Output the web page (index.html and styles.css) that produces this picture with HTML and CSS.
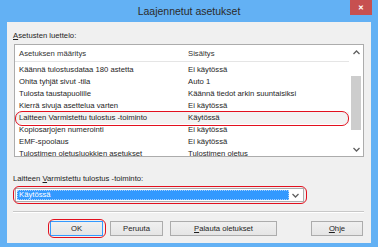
FILE: index.html
```html
<!DOCTYPE html>
<html lang="fi">
<head>
  <meta charset="UTF-8">
  <title>Laajennetut asetukset</title>
  <link rel="stylesheet" href="styles.css">
</head>
<body>
  <div class="window">
    <div class="titlebar">
      <span></span>
      <span class="title">Laajennetut asetukset</span>
      <span class="close">&#x2715;</span>
    </div>

    <div class="client">
      <div class="label"><u>A</u>setusten luettelo:</div>

      <div class="listbox">
        <div class="list">
          <div class="list-head">
            <span class="col-name">Asetuksen määritys</span>
            <span class="col-value">Sisältys</span>
          </div>
          <div class="rows">
            <div class="row"><span class="col-name">Käännä tulostusdataa 180 astetta</span><span class="col-value">Ei käytössä</span></div>
            <div class="row"><span class="col-name">Ohita tyhjät sivut -tila</span><span class="col-value">Auto 1</span></div>
            <div class="row"><span class="col-name">Tulosta taustapuolille</span><span class="col-value">Käännä tiedot arkin suuntaisiksi</span></div>
            <div class="row"><span class="col-name">Kierrä sivuja asettelua varten</span><span class="col-value">Ei käytössä</span></div>
            <div class="row selected"><span class="col-name">Laitteen Varmistettu tulostus -toiminto</span><span class="col-value">Käytössä</span></div>
            <div class="row"><span class="col-name">Kopiosarjojen numerointi</span><span class="col-value">Ei käytössä</span></div>
            <div class="row"><span class="col-name">EMF-spoolaus</span><span class="col-value">Ei käytössä</span></div>
            <div class="row"><span class="col-name">Tulostimen oletusluokkien asetukset</span><span class="col-value">Tulostimen oletus</span></div>
          </div>
        </div>
        <div class="scrollbar">
          <svg class="chevron" width="7" height="5" viewBox="0 0 7 5"><path d="M0.5 4 L3.5 1 L6.5 4" fill="none" stroke="#606060" stroke-width="1.3"/></svg>
          <div class="track">
            <div class="thumb"></div>
          </div>
          <svg class="chevron" width="7" height="5" viewBox="0 0 7 5"><path d="M0.5 1 L3.5 4 L6.5 1" fill="none" stroke="#606060" stroke-width="1.3"/></svg>
        </div>
      </div>

      <div class="label label-combo">Laitteen <u>V</u>armistettu tulostus -toiminto:</div>

      <div class="combo">
        <div class="combo-value"><span>Käytössä</span></div>
        <span class="combo-arrow">
          <svg width="7" height="5" viewBox="0 0 7 5"><path d="M0.5 1 L3.5 4 L6.5 1" fill="none" stroke="#606060" stroke-width="1.3"/></svg>
        </span>
      </div>

      <div class="separator"></div>

      <div class="buttons">
        <button class="btn btn-ok">OK</button>
        <button class="btn">Peruuta</button>
        <button class="btn btn-wide"><u>P</u>alauta oletukset</button>
        <button class="btn btn-help"><u>O</u>hje</button>
      </div>
    </div>
  </div>
</body>
</html>
```

FILE: styles.css
```css
body {
  margin: 0;
  font-family: "Liberation Sans", Arial, sans-serif;
  font-size: 7.7px;
  color: #1e1e1e;
}

.window {
  width: 378px;
  height: 247px;
  background-color: #63b1f4;
  display: flex;
  flex-direction: column;
}

.titlebar {
  height: 22px;
  display: grid;
  grid-template-columns: 1fr auto 1fr;
}

.title {
  font-size: 10.5px;
  color: #2b2b2b;
  line-height: 22px;
}

.close {
  justify-self: end;
  width: 22px;
  height: 15px;
  margin-right: 6px;
  background-color: #c75050;
  color: #fff;
  font-size: 7px;
  font-weight: bold;
  line-height: 15px;
  text-align: center;
}

.client {
  margin: 0 7px;
  height: 221px;
  background-color: #f0f0f0;
  padding: 9px 7px 0 7px;
  box-sizing: border-box;
}

.label {
  margin-left: -1px;
  height: 13px;
  line-height: 9px;
}

.listbox {
  height: 111px;
  border: 1px solid #acacac;
  background-color: #fff;
  display: flex;
}

.list {
  flex: 1;
  overflow: hidden;
}

.list-head {
  height: 16px;
  line-height: 18px;
  border-bottom: 1px solid #e5e5e5;
  display: flex;
  color: #333;
}

.rows {
  padding-top: 2px;
}

.row {
  height: 12px;
  line-height: 12px;
  display: flex;
  position: relative;
}

.col-name {
  width: 169px;
  padding-left: 4px;
  white-space: nowrap;
}

.col-value {
  white-space: nowrap;
}

.selected {
  background-color: #f2f2f2;
}

/* red marker drawn over the row */
.selected::after {
  content: "";
  position: absolute;
  left: 0;
  right: 0;
  top: -1px;
  bottom: -2px;
  border: 1.5px solid #e2101e;
  border-radius: 7px;
}

.scrollbar {
  width: 14px;
  display: flex;
  flex-direction: column;
  align-items: center;
  background-color: #fff;
}

.chevron {
  margin: 5px 0 4px;
}

.track {
  flex: 1;
  width: 10px;
  padding-top: 17px;
}

.thumb {
  height: 54px;
  background-color: #cdcdcd;
}

.label-combo {
  margin-top: 17px;
  height: 14px;
}

.combo {
  position: relative;
  width: 289px;
  height: 14px;
  margin-left: 1px;
  border: 1px solid #acacac;
  background-color: #fff;
  box-sizing: border-box;
  display: flex;
  align-items: center;
  padding: 1px;
}

.combo::after,
.btn-ok::after {
  content: "";
  position: absolute;
  left: -3px;
  right: -4px;
  top: -3px;
  bottom: -3px;
  border: 1.5px solid #e2101e;
  border-radius: 6px;
}

.combo-value {
  flex: 1;
  height: 10px;
  background-color: #3399ff;
  color: #fff;
  line-height: 10px;
  padding-left: 2px;
  outline: 1px dotted #a6d0ff;
  outline-offset: -1px;
}

.combo-arrow {
  width: 13px;
  display: flex;
  justify-content: center;
}

.separator {
  margin-top: 9px;
  height: 1px;
  background-color: #c8c8c8;
  border-bottom: 1px solid #fff;
  margin-left: -1px;
}

.buttons {
  margin-top: 8px;
  display: flex;
  padding-left: 36px;
}

.btn {
  position: relative;
  height: 15px;
  width: 53px;
  padding: 0;
  margin-right: 7px;
  border: 1px solid #acacac;
  background: linear-gradient(#f0f0f0, #e5e5e5);
  font-family: "Liberation Sans", Arial, sans-serif;
  font-size: 7.7px;
  color: #1e1e1e;
}

.btn-ok {
  border-color: #3399ff;
}

.btn-wide {
  width: 107px;
}

.btn-help {
  margin-left: 27px;
  margin-right: 0;
  width: 52px;
}
```
